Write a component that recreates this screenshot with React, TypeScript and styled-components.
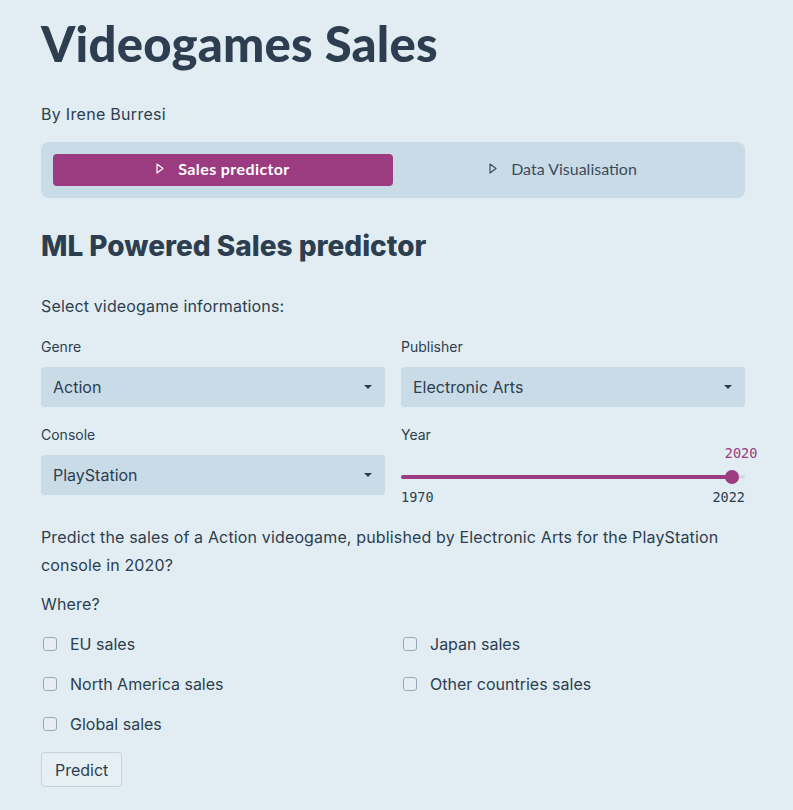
import React from "react";
import styled, { createGlobalStyle } from "styled-components";

const Global = createGlobalStyle`
  html, body { margin: 0; padding: 0; background: #e1edf2; }
  body { font-family: "Inter", "Open Sans", sans-serif; color: #2c3e50; }
  * { box-sizing: border-box; }
`;

const Page = styled.div`
  padding: 15px 48px 24px 41px;
  width: 793px;
`;

const Title = styled.h1`
  margin: 0;
  font-family: "Lato", sans-serif;
  font-size: 49px;
  font-weight: 900;
  line-height: 56px;
  color: #2c3e50;
  letter-spacing: 0.2px;
`;

const Byline = styled.p`
  margin: 31px 0 0;
  font-size: 16px;
  line-height: 24px;
  letter-spacing: 0.3px;
`;

const TabBar = styled.div`
  margin-top: 16px;
  background: #c9dbe7;
  border-radius: 8px;
  padding: 12px;
  display: grid;
  grid-template-columns: 1fr 1fr;
  gap: 0;
`;

const Tab = styled.div<{ $active?: boolean }>`
  height: 32px;
  padding-bottom: 3px;
  border-radius: 4px;
  display: flex;
  align-items: center;
  justify-content: center;
  gap: 14px;
  font-family: "Lato", sans-serif;
  font-size: 16px;
  font-weight: ${(p) => (p.$active ? 700 : 400)};
  letter-spacing: ${(p) => (p.$active ? "0.4px" : "0")};
  background: ${(p) => (p.$active ? "#9b3b80" : "transparent")};
  color: ${(p) => (p.$active ? "#ffffff" : "#3d4b5c")};
`;

const TabIcon = ({ color }: { color: string }) => (
  <svg width="8" height="11" viewBox="0 0 8 11">
    <path d="M1 1 L7 5.5 L1 10 Z" fill="none" stroke={color} strokeWidth="1.2" strokeLinejoin="round" />
  </svg>
);

const H2 = styled.h2`
  margin: 28px 0 0;
  font-size: 28px;
  font-weight: 800;
  line-height: 40px;
`;

const Text = styled.p<{ $mt?: number }>`
  margin: ${(p) => p.$mt ?? 0}px 0 0;
  font-size: 16px;
  line-height: 28px;
  letter-spacing: 0.15px;
`;

const Grid = styled.div`
  display: grid;
  grid-template-columns: 1fr 1fr;
  column-gap: 16px;
`;

const Field = styled.div<{ $mt?: number }>`
  margin-top: ${(p) => p.$mt ?? 0}px;
  display: flex;
  flex-direction: column;
`;

const Label = styled.label`
  font-size: 14px;
  line-height: 20px;
  height: 20px;
  margin-bottom: 10px;
`;

const Select = styled.div`
  height: 40px;
  background: #c9dbe7;
  border-radius: 4px;
  padding: 0 12px;
  display: flex;
  align-items: center;
  justify-content: space-between;
  font-size: 16px;
`;

const Caret = () => (
  <svg width="10" height="6" viewBox="0 0 10 6">
    <path d="M1 1 L9 1 L5 5 Z" fill="#2c3e50" />
  </svg>
);

const SliderWrap = styled.div`
  position: relative;
  height: 56px;
`;

const Track = styled.div`
  position: absolute;
  left: 0;
  right: 0;
  top: 20px;
  height: 4px;
  border-radius: 2px;
  background: #c9dbe7;
`;

const Fill = styled.div`
  position: absolute;
  left: 0;
  top: 0;
  bottom: 0;
  background: #9b3b80;
  border-radius: 2px;
`;

const Thumb = styled.div`
  position: absolute;
  top: -5px;
  width: 14px;
  height: 14px;
  margin-left: -7px;
  border-radius: 50%;
  background: #9b3b80;
`;

const ThumbValue = styled.div`
  position: absolute;
  top: -25px;
  left: 0;
  font-family: "DejaVu Sans Mono", monospace;
  font-size: 13.5px;
  color: #9b3b80;
  white-space: nowrap;
`;

const Ticks = styled.div`
  position: absolute;
  left: 0;
  right: 0;
  top: 34px;
  display: flex;
  justify-content: space-between;
  font-family: "DejaVu Sans Mono", monospace;
  font-size: 13.5px;
  color: #2c3e50;
`;

const CheckGrid = styled.div`
  margin-top: 12px;
  display: grid;
  grid-template-columns: 1fr 1fr;
  column-gap: 16px;
  row-gap: 12px;
`;

const CheckRow = styled.label`
  display: flex;
  align-items: center;
  gap: 13px;
  height: 28px;
  font-size: 16px;
`;

const Box = styled.span`
  width: 14px;
  height: 14px;
  margin-left: 2px;
  border: 1.5px solid #9aa7b3;
  border-radius: 3px;
  background: #e6eef3;
`;

const Button = styled.button`
  margin-top: 14px;
  height: 35px;
  padding: 0 13px;
  font-family: inherit;
  font-size: 16px;
  color: #2c3e50;
  background: #e6eff4;
  border: 1px solid #c5d2db;
  border-radius: 4px;
`;

export default function App() {
  const min = 1970, max = 2022, val = 2020;
  const pct = ((val - min) / (max - min)) * 100;
  return (
    <>
      <Global />
      <Page>
        <Title>Videogames Sales</Title>
        <Byline>By Irene Burresi</Byline>
        <TabBar>
          <Tab $active>
            <TabIcon color="#ffffff" />
            Sales predictor
          </Tab>
          <Tab>
            <TabIcon color="#3d4b5c" />
            Data Visualisation
          </Tab>
        </TabBar>
        <H2>ML Powered Sales predictor</H2>
        <Text $mt={26}>Select videogame informations:</Text>
        <Grid>
          <Field $mt={17}>
            <Label>Genre</Label>
            <Select>Action<Caret /></Select>
          </Field>
          <Field $mt={17}>
            <Label>Publisher</Label>
            <Select>Electronic Arts<Caret /></Select>
          </Field>
          <Field $mt={18}>
            <Label>Console</Label>
            <Select>PlayStation<Caret /></Select>
          </Field>
          <Field $mt={18}>
            <Label>Year</Label>
            <SliderWrap>
              <Track>
                <Fill style={{ width: `${pct}%` }} />
                <Thumb style={{ left: `${pct}%` }}>
                  <ThumbValue>{val}</ThumbValue>
                </Thumb>
              </Track>
              <Ticks>
                <span>{min}</span>
                <span>{max}</span>
              </Ticks>
            </SliderWrap>
          </Field>
        </Grid>
        <Text $mt={12}>
          Predict the sales of a Action videogame, published by Electronic Arts for the PlayStation console in 2020?
        </Text>
        <Text $mt={11}>Where?</Text>
        <CheckGrid>
          <CheckRow><Box />EU sales</CheckRow>
          <CheckRow><Box />Japan sales</CheckRow>
          <CheckRow><Box />North America sales</CheckRow>
          <CheckRow><Box />Other countries sales</CheckRow>
          <CheckRow><Box />Global sales</CheckRow>
        </CheckGrid>
        <Button>Predict</Button>
      </Page>
    </>
  );
}
